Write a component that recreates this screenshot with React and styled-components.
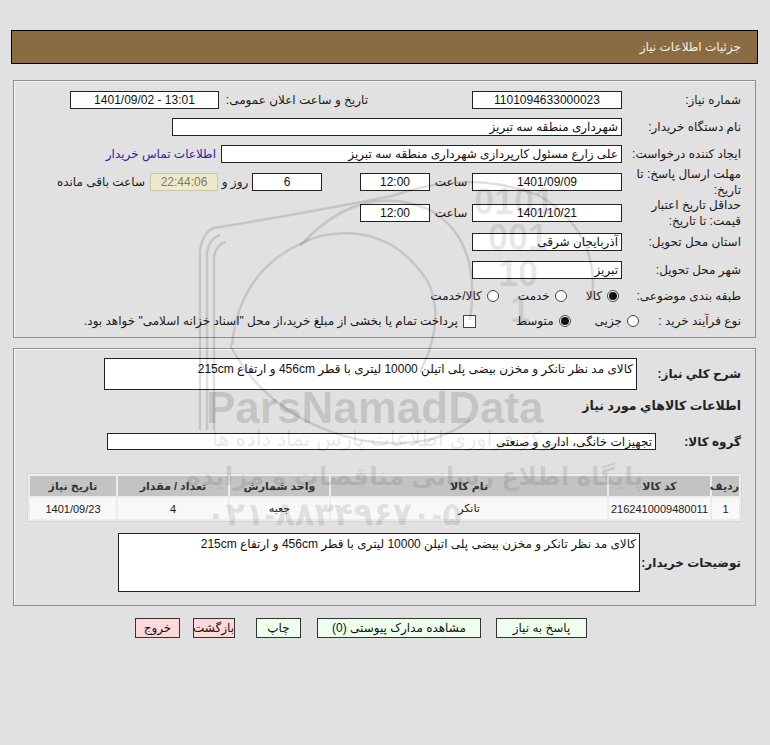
import React from "react";
import styled, { createGlobalStyle } from "styled-components";

const Global = createGlobalStyle`
  html, body { margin: 0; padding: 0; background: #e1e1e1; }
  body {
    font-family: "Liberation Sans", "DejaVu Sans", sans-serif;
    font-size: 12px;
    color: #1a1a1a;
  }
  * { box-sizing: border-box; }
`;

const Page = styled.div`
  position: relative;
  width: 770px;
  height: 745px;
  padding-top: 30px;
  direction: rtl;
  overflow: hidden;
`;

const HeaderBar = styled.div`
  margin: 0 12px 0 11px;
  height: 34px;
  border: 1px solid #000;
  background: #8b6c42;
  color: #f5f0e6;
  display: flex;
  align-items: center;
  padding-right: 16px;
  font-size: 12px;
`;

const Panel = styled.div`
  margin: ${(p) => p.$top}px 14px 0 13px;
  height: 258px;
  border: 1px solid #8e8e8e;
  box-shadow: inset 1px 1px 0 #f6f6f6;
  padding: ${(p) => p.$pt}px 14px 0 0;
  display: flex;
  flex-direction: column;
  align-items: flex-start;
`;

const Row = styled.div`
  display: flex;
  align-items: center;
  height: ${(p) => p.$h}px;
  margin-top: ${(p) => p.$mt || 0}px;
  flex-shrink: 0;
`;

const Label = styled.div`
  width: ${(p) => p.$w}px;
  flex-shrink: 0;
  text-align: right;
  line-height: 16px;
  white-space: nowrap;
  font-weight: ${(p) => (p.$bold ? "bold" : "normal")};
  font-size: ${(p) => (p.$bold ? "12px" : "12px")};
  color: ${(p) => (p.$bold ? "#222" : "#1a1a1a")};
`;

const LabelLine = styled.span`
  display: block;
`;

const Field = styled.div`
  width: ${(p) => p.$w}px;
  height: ${(p) => p.$h || 18}px;
  flex-shrink: 0;
  background: #fff;
  border: 1px solid #222;
  padding: ${(p) => (p.$tall ? "2px 3px" : "0 3px")};
  line-height: 16px;
  text-align: ${(p) => (p.$center ? "center" : "right")};
  white-space: ${(p) => (p.$tall ? "normal" : "nowrap")};
  overflow: hidden;
  font-size: 12px;
  color: #111;
`;

const LtrText = styled.span`
  direction: ltr;
  unicode-bidi: isolate;
`;

const Group = styled.div`
  display: flex;
  align-items: center;
  justify-content: space-between;
  width: ${(p) => p.$w}px;
  margin-right: ${(p) => p.$mr}px;
`;

const SubLabel = styled.span`
  padding-right: 4px;
  white-space: nowrap;
`;

const Unit = styled.div`
  width: ${(p) => p.$w}px;
  flex-shrink: 0;
  text-align: center;
  white-space: nowrap;
`;

const Spacer = styled.div`
  width: ${(p) => p.$w}px;
  flex-shrink: 0;
`;

const Countdown = styled.div`
  width: 68px;
  height: 18px;
  flex-shrink: 0;
  background: #eeeac9;
  border: 1px solid #c9c6ad;
  color: #7c7b70;
  text-align: center;
  line-height: 16px;
  font-size: 12px;
`;

const Note = styled.span`
  margin-right: ${(p) => p.$mr || 0}px;
  white-space: nowrap;
`;

const Link = styled.a`
  margin-right: 5px;
  color: #2626a6;
  text-decoration: none;
  white-space: nowrap;
`;

const Option = styled.label`
  display: flex;
  align-items: center;
  gap: 5px;
  margin-right: ${(p) => p.$mr || 0}px;
  white-space: nowrap;
`;

const RadioDot = styled.span`
  width: 12px;
  height: 12px;
  border-radius: 50%;
  border: 1px solid #444;
  background: #fff;
  display: flex;
  align-items: center;
  justify-content: center;
  flex-shrink: 0;
  &::after {
    content: "";
    width: 8px;
    height: 8px;
    border-radius: 50%;
    background: ${(p) => (p.$on ? "#111" : "transparent")};
  }
`;

const CheckBox = styled.span`
  width: 13px;
  height: 13px;
  border: 1px solid #444;
  background: #fff;
  flex-shrink: 0;
`;

const Title = styled.div`
  font-weight: bold;
  font-size: 12.5px;
  color: #222;
  height: 20px;
  line-height: 20px;
  margin-top: 6px;
  flex-shrink: 0;
`;

const Table = styled.table`
  width: 715px;
  margin-top: 23px;
  margin-right: -1px;
  table-layout: fixed;
  border-collapse: separate;
  border-spacing: 2px;
  background: #ececec;
  border: 1px solid #d6d6d6;
  font-size: 11px;
  flex-shrink: 0;
`;

const Th = styled.th`
  background: #c3c3c3;
  height: 20px;
  font-weight: bold;
  color: #333;
  text-align: center;
  padding: 0;
`;

const Td = styled.td`
  background: #f8f8f8;
  height: 21px;
  text-align: center;
  color: #222;
  padding: 0;
  white-space: nowrap;
  overflow: hidden;
`;

const ButtonRow = styled.div`
  display: flex;
  margin-top: 12px;
  padding-right: 183px;
`;

const Button = styled.button`
  width: ${(p) => p.$w}px;
  height: 20px;
  margin-left: ${(p) => p.$gap || 0}px;
  padding: 0;
  border: 1px solid #333;
  background: ${(p) => (p.$tone === "red" ? "#ffd9d9" : "#eeffee")};
  font-family: "Liberation Sans", "DejaVu Sans", sans-serif;
  font-size: 12px;
  color: #111;
  white-space: nowrap;
  overflow: hidden;
`;

const Watermark = styled.div`
  position: absolute;
  inset: 0;
  pointer-events: none;
  z-index: 5;
  direction: ltr;
`;

const WmText = styled.div`
  position: absolute;
  left: ${(p) => p.$x}px;
  top: ${(p) => p.$y}px;
  font-size: ${(p) => p.$size}px;
  font-weight: ${(p) => (p.$bold ? "bold" : "normal")};
  color: rgba(0, 0, 0, ${(p) => p.$a || 0.12});
  white-space: nowrap;
  line-height: 1;
  font-family: "Liberation Sans", "DejaVu Sans", sans-serif;
`;

const WmSvg = styled.svg`
  position: absolute;
  left: 0;
  top: 0;
`;

const radios1 = [
  { t: "کالا", on: true },
  { t: "خدمت", on: false },
  { t: "کالا/خدمت", on: false },
];

const cols = [27, 101, 276, 99, 110, 86];
const heads = ["ردیف", "کد کالا", "نام کالا", "واحد شمارش", "تعداد / مقدار", "تاریخ نیاز"];
const rowData = ["1", "2162410009480011", "تانکر", "جعبه", "4", "1401/09/23"];
const desc = "کالای مد نظر تانکر و مخزن بیضی پلی اتیلن 10000 لیتری با قطر 456cm و ارتفاع 215cm";

export default function App() {
  return (
    <Page>
      <Global />
      <HeaderBar>جزئیات اطلاعات نیاز</HeaderBar>

      <Panel $top={16} $pt={6}>
        <Row $h={26}>
          <Label $w={119}>شماره نیاز:</Label>
          <Field $w={150} $center>1101094633000023</Field>
          <Group $w={302} $mr={100}>
            <SubLabel>تاریخ و ساعت اعلان عمومی:</SubLabel>
            <Field $w={149} $center>
              <LtrText>1401/09/02 - 13:01</LtrText>
            </Field>
          </Group>
        </Row>
        <Row $h={27}>
          <Label $w={119}>نام دستگاه خریدار:</Label>
          <Field $w={450}>شهرداری منطقه سه تبریز</Field>
        </Row>
        <Row $h={27}>
          <Label $w={119}>ایجاد کننده درخواست:</Label>
          <Field $w={401}>علی زارع مسئول کارپردازی شهرداری منطقه سه تبریز</Field>
          <Link href="#">اطلاعات تماس خریدار</Link>
        </Row>
        <Row $h={30}>
          <Label $w={119}>
            <LabelLine>مهلت ارسال پاسخ: تا</LabelLine>
            <LabelLine>تاریخ:</LabelLine>
          </Label>
          <Field $w={150} $center>1401/09/09</Field>
          <Unit $w={42}>ساعت</Unit>
          <Field $w={70} $center>12:00</Field>
          <Spacer $w={38} />
          <Field $w={70} $center>6</Field>
          <Unit $w={34}>روز و</Unit>
          <Countdown>22:44:06</Countdown>
          <Note $mr={5}>ساعت باقی مانده</Note>
        </Row>
        <Row $h={31}>
          <Label $w={119}>
            <LabelLine>حداقل تاریخ اعتبار</LabelLine>
            <LabelLine>قیمت: تا تاریخ:</LabelLine>
          </Label>
          <Field $w={150} $center>1401/10/21</Field>
          <Unit $w={42}>ساعت</Unit>
          <Field $w={70} $center>12:00</Field>
        </Row>
        <Row $h={28}>
          <Label $w={119}>استان محل تحویل:</Label>
          <Field $w={150}>آذربایجان شرقی</Field>
        </Row>
        <Row $h={27}>
          <Label $w={119}>شهر محل تحویل:</Label>
          <Field $w={150}>تبریز</Field>
        </Row>
        <Row $h={26}>
          <Label $w={122}>طبقه بندی موضوعی:</Label>
          {radios1.map((r, i) => (
            <Option key={r.t} $mr={i === 0 ? 0 : 19}>
              <RadioDot $on={r.on} />
              {r.t}
            </Option>
          ))}
        </Row>
        <Row $h={24}>
          <Label $w={102}>نوع فرآیند خرید :</Label>
          <Option>
            <RadioDot />
            جزیی
          </Option>
          <Option $mr={24}>
            <RadioDot $on />
            متوسط
          </Option>
          <Option $mr={40}>
            <CheckBox />
            پرداخت تمام یا بخشی از مبلغ خرید،از محل "اسناد خزانه اسلامی" خواهد بود.
          </Option>
        </Row>
      </Panel>

      <Panel $top={10} $pt={9}>
        <Row $h={32}>
          <Label $w={104} $bold>شرح کلي نياز:</Label>
          <Field $w={533} $h={32} $tall>{desc}</Field>
        </Row>
        <Title>اطلاعات کالاهاي مورد نياز</Title>
        <Row $h={17} $mt={17}>
          <Label $w={85} $bold>گروه کالا:</Label>
          <Field $w={549} $h={17}>تجهیزات خانگی، اداری و صنعتی</Field>
        </Row>
        <Table>
          <colgroup>
            {cols.map((w, i) => (
              <col key={i} style={{ width: w }} />
            ))}
          </colgroup>
          <thead>
            <tr>
              {heads.map((h) => (
                <Th key={h}>{h}</Th>
              ))}
            </tr>
          </thead>
          <tbody>
            <tr>
              {rowData.map((d, i) => (
                <Td key={i}>{d}</Td>
              ))}
            </tr>
          </tbody>
        </Table>
        <Row $h={59} $mt={11}>
          <Label $w={101} $bold>توضیحات خریدار:</Label>
          <Field $w={522} $h={59} $tall>{desc}</Field>
        </Row>
      </Panel>

      <ButtonRow>
        <Button $w={91} $gap={15}>پاسخ به نیاز</Button>
        <Button $w={164} $gap={16}>مشاهده مدارک پیوستی (0)</Button>
        <Button $w={45} $gap={21}>چاپ</Button>
        <Button $w={42} $gap={13} $tone="red">بازگشت</Button>
        <Button $w={45} $tone="red">خروج</Button>
      </ButtonRow>

      <Watermark aria-hidden="true">
        <WmSvg width="770" height="745" viewBox="0 0 770 745">
          <g fill="none" stroke="rgba(0,0,0,0.12)" strokeWidth="2.5">
            <path d="M200 430 L200 250 Q203 232 214 228 Q300 214 392 196" />
            <path d="M207 430 L207 252 Q210 238 220 235" />
            <path d="M214 430 L214 256 Q217 244 226 242" />
            <path d="M232 345 Q240 262 320 236 Q390 222 428 282 Q446 320 420 372" />
            <path d="M300 246 Q360 180 430 210 Q482 240 470 320" />
            <path d="M392 196 Q470 168 540 196 Q600 232 592 300" />
            <path d="M230 345 Q270 420 360 440 Q430 452 470 420" />
          </g>
        </WmSvg>
        <WmText $x={474} $y={184} $size={36} $bold $a={0.09}>0101</WmText>
        <WmText $x={488} $y={220} $size={36} $bold $a={0.09}>001</WmText>
        <WmText $x={498} $y={256} $size={36} $bold $a={0.09}>10</WmText>
        <WmText $x={510} $y={292} $size={36} $bold $a={0.09}>1</WmText>
        <WmText $x={206} $y={386} $size={44} $bold $a={0.13}>ParsNamadData</WmText>
        <WmText $x={212} $y={428} $size={21} $a={0.1}>مرکز فراوری اطلاعات پارس نماد داده ها</WmText>
        <WmText $x={186} $y={464} $size={25} $bold $a={0.1}>پایگاه اطلاع رسانی مناقصات و مزایده</WmText>
        <WmText $x={206} $y={498} $size={32} $bold $a={0.1}>۰۲۱-۸۸۳۴۹۶۷۰-۵</WmText>
      </Watermark>
    </Page>
  );
}
